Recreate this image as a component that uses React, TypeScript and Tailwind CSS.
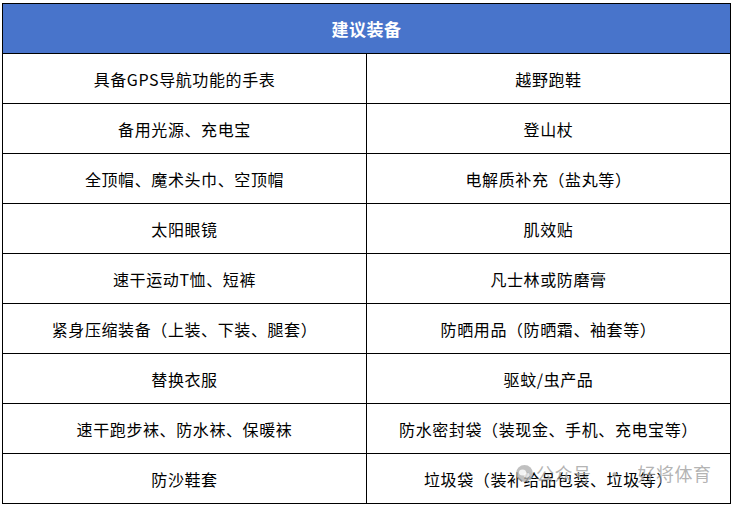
const rows: [string, string][] = [
  ["具备GPS导航功能的手表", "越野跑鞋"],
  ["备用光源、充电宝", "登山杖"],
  ["全顶帽、魔术头巾、空顶帽", "电解质补充（盐丸等）"],
  ["太阳眼镜", "肌效贴"],
  ["速干运动T恤、短裤", "凡士林或防磨膏"],
  ["紧身压缩装备（上装、下装、腿套）", "防晒用品（防晒霜、袖套等）"],
  ["替换衣服", "驱蚊/虫产品"],
  ["速干跑步袜、防水袜、保暖袜", "防水密封袋（装现金、手机、充电宝等）"],
  ["防沙鞋套", "垃圾袋（装补给品包装、垃圾等）"],
];

export default function App() {
  return (
    <div
      className="relative w-[734px] h-[506px] bg-white pl-[2px] pt-[3px] overflow-hidden"
      style={{ fontFamily: '"Noto Sans CJK SC", "Liberation Sans", sans-serif' }}
    >
      <table className="table-fixed border-collapse w-[729px] text-black">
        <thead>
          <tr>
            <th
              colSpan={2}
              className="h-[50px] border border-black bg-[#4874cb] text-white text-[17px] font-bold text-center tracking-[0.5px]"
            >
              建议装备
            </th>
          </tr>
        </thead>
        <tbody>
          {rows.map(([a, b]) => (
            <tr key={a}>
              <td className="w-[364px] h-[50px] border border-black text-center text-[16px] leading-none tracking-[0.6px]">
                {a}
              </td>
              <td className="h-[50px] border border-black text-center text-[16px] leading-none tracking-[0.6px]">
                {b}
              </td>
            </tr>
          ))}
        </tbody>
      </table>

      {/* watermark */}
      <div className="absolute left-[516px] top-[464px] flex items-center gap-[3px] text-[18px] leading-none text-[#a0a0a0]/80 pointer-events-none">
        <svg width="17" height="17" viewBox="0 0 17 17">
          <circle cx="8.5" cy="8.5" r="8.5" fill="#b0b0b0" fillOpacity="0.8" />
          <ellipse cx="6.5" cy="7.5" rx="3.6" ry="3" fill="#fff" fillOpacity="0.8" />
          <ellipse cx="10.5" cy="10" rx="3" ry="2.5" fill="#fff" fillOpacity="0.6" />
        </svg>
        <span className="tracking-[0.5px]">公众号</span>
        <span className="mx-[11px]">·</span>
        <span className="tracking-[0.5px]">好将体育</span>
      </div>
    </div>
  );
}
